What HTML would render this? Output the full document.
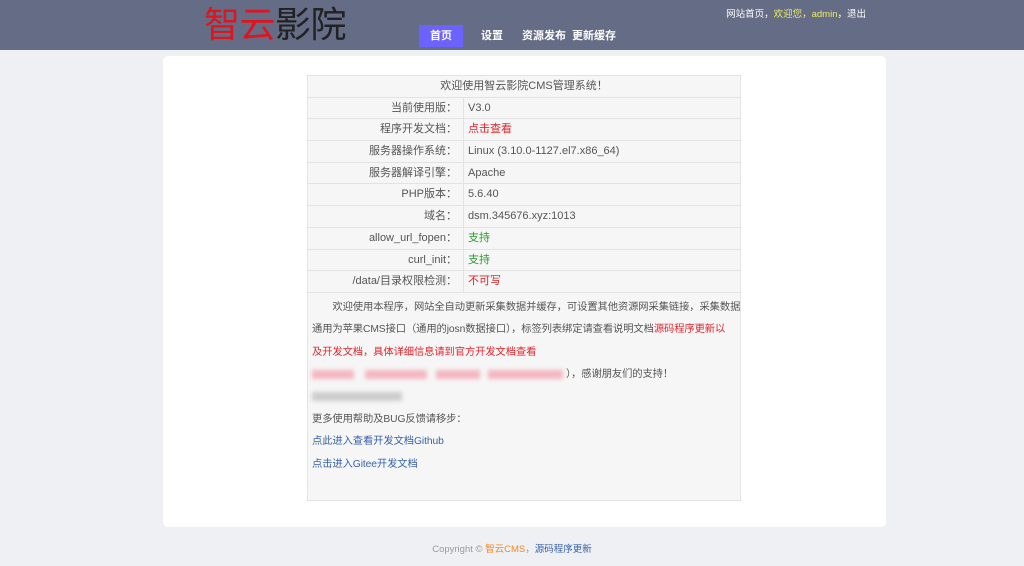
<!DOCTYPE html>
<html><head><meta charset="utf-8"><style>
*{margin:0;padding:0;box-sizing:border-box}
body{width:1024px;height:566px;background:#eef0f4;font-family:"Liberation Sans","Noto Sans CJK SC",sans-serif;font-size:11px;color:#555;position:relative;overflow:hidden}
.hd{position:absolute;left:0;top:0;width:1024px;height:50px;background:#656c86}
.logo{position:absolute;left:204px;top:4px;font-size:36px;line-height:42px;color:#222;letter-spacing:-0.5px}
.logo span{color:#e0141c}
.nav a{position:absolute;top:25px;color:#fff;font-size:11px;font-weight:bold;line-height:22px;text-decoration:none}
.nav a.on{background:#6c63ff;left:419px;width:44px;text-align:center}
.top{position:absolute;right:158px;top:6px;color:#fff;font-size:9.5px}
.top .y{color:#ecec62}
.card{position:absolute;left:163px;top:56px;width:723px;height:471px;background:#fff;border-radius:5px}
.tb{position:absolute;left:307px;top:75px;width:434px;height:426px;background:#f6f6f6;border:1px solid #e3e3e3;overflow:hidden}
.r{height:21.7px;border-bottom:1px solid #e3e3e3;display:flex;line-height:21px}
.r .l{width:156px;text-align:right;padding-right:6px;border-right:1px solid #e3e3e3}
.r .v{padding-left:4px}
.t{text-align:center;display:block}
.red{color:#e2242c}.grn{color:#2a9a2a}.blu{color:#3a62a8}
.txt{padding:4px 4px 0 4px;line-height:22.4px;font-size:10.3px;white-space:nowrap;letter-spacing:-0.1px}
.blur{display:inline-block;height:9px;background:#f4b6c0;filter:blur(2px);vertical-align:middle}
.blurg{display:inline-block;height:9px;background:#ccc;filter:blur(2px);vertical-align:middle}
.ft{position:absolute;top:541px;left:0;width:1024px;text-align:center;font-size:9.5px;color:#999}
</style></head><body>
<div class="hd">
<div class="logo"><span>智云</span>影院</div>
<div class="nav"><a class="on">首页</a><a style="left:481px">设置</a><a style="left:522px">资源发布</a><a style="left:572px">更新缓存</a></div>
<div class="top">网站首页，<span class="y">欢迎您，admin</span>，退出</div>
</div>
<div class="card"></div>
<div class="tb">
<div class="r"><span class="t" style="width:100%">欢迎使用智云影院CMS管理系统！</span></div>
<div class="r"><div class="l">当前使用版：</div><div class="v">V3.0</div></div>
<div class="r"><div class="l">程序开发文档：</div><div class="v red">点击查看</div></div>
<div class="r"><div class="l">服务器操作系统：</div><div class="v">Linux (3.10.0-1127.el7.x86_64)</div></div>
<div class="r"><div class="l">服务器解译引擎：</div><div class="v">Apache</div></div>
<div class="r"><div class="l">PHP版本：</div><div class="v">5.6.40</div></div>
<div class="r"><div class="l">域名：</div><div class="v">dsm.345676.xyz:1013</div></div>
<div class="r"><div class="l">allow_url_fopen：</div><div class="v grn">支持</div></div>
<div class="r"><div class="l">curl_init：</div><div class="v grn">支持</div></div>
<div class="r"><div class="l">/data/目录权限检测：</div><div class="v red">不可写</div></div>
<div class="txt">
<div>&emsp;&emsp;欢迎使用本程序，网站全自动更新采集数据并缓存，可设置其他资源网采集链接，采集数据</div>
<div>通用为苹果CMS接口（通用的josn数据接口），标签列表绑定请查看说明文档<span class="red">源码程序更新以</span></div>
<div class="red">及开发文档，具体详细信息请到官方开发文档查看</div>
<div><span class="blur" style="width:42px"></span> <span class="blur" style="width:62px;margin-left:8px"></span> <span class="blur" style="width:44px;margin-left:6px"></span> <span class="blur" style="width:75px;margin-left:6px"></span> ），感谢朋友们的支持！</div>
<div><span class="blurg" style="width:90px"></span></div>
<div>更多使用帮助及BUG反馈请移步：</div>
<div class="blu">点此进入查看开发文档Github</div>
<div class="blu">点击进入Gitee开发文档</div>
</div>
</div>
<div class="ft">Copyright © <span style="color:#f08a24">智云CMS</span>，<span class="blu">源码程序更新</span></div>
</body></html>
